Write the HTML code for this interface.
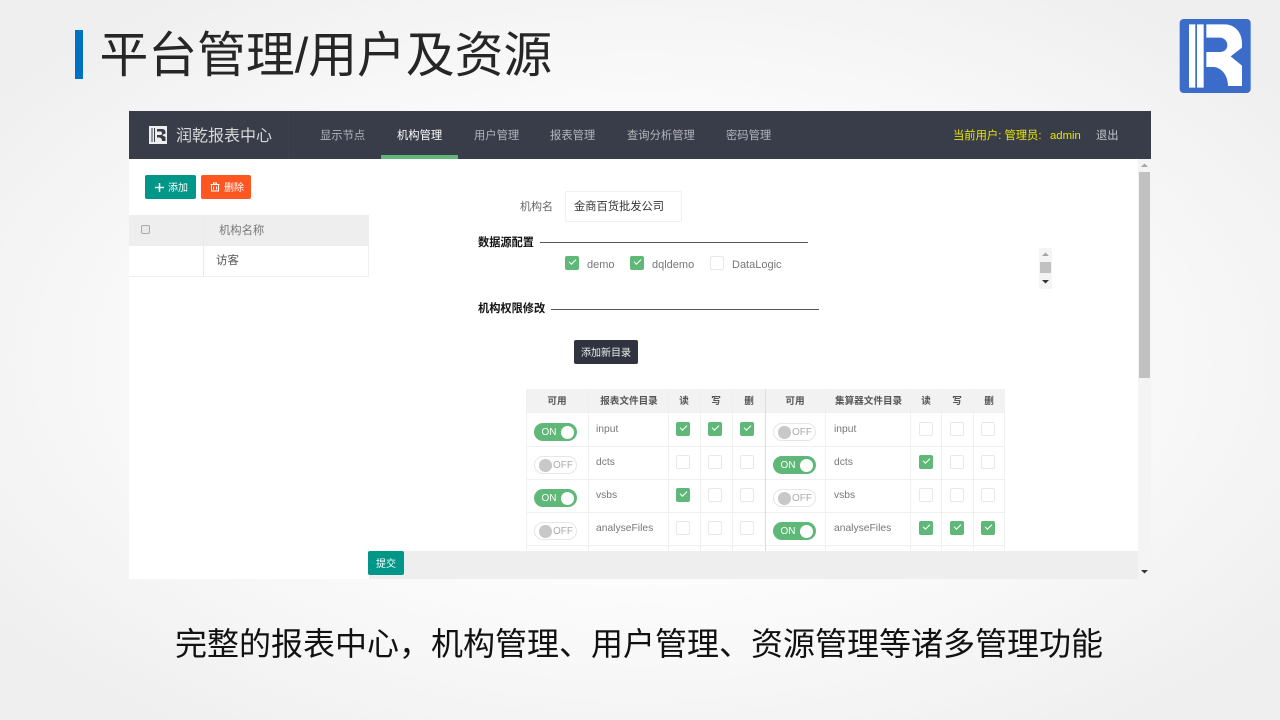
<!DOCTYPE html>
<html lang="zh"><head><meta charset="utf-8"><title>平台管理/用户及资源</title>
<style>
html,body{margin:0;padding:0}
body{width:1280px;height:720px;position:relative;overflow:hidden;background:radial-gradient(ellipse 800px 450px at 50% 50%,#fff 35%,#f7f7f7 70%,#efefef 100%);font-family:"Liberation Sans","Noto Sans CJK SC",sans-serif}
div,span,svg.a{position:absolute}
.t{white-space:nowrap;line-height:20px;height:20px}
.n{font-size:11.3px;color:#b4b6bb;top:126px}
.h{font-size:9.6px;font-weight:700;color:#555;top:392px;width:60px;text-align:center}
.r{font-size:10.3px;color:#777}
.ln{background:#f0f0f0}
.c{width:12px;height:12px;border:1px solid #e8e8e8;border-radius:2px;background:#fff}
.c.k{background:#5fb878;border-color:#5fb878}
.c.k::after{content:"";position:absolute;left:2.5px;top:2px;width:6px;height:3px;border-left:1.2px solid #fff;border-bottom:1.2px solid #fff;transform:rotate(-45deg)}
.on,.off{width:43px;height:18px;border-radius:9px;box-sizing:border-box;font-size:10px;line-height:18px}
.on{background:#5fb878;color:#fff}
.on span{left:7.5px;top:1px}
.on i{position:absolute;right:3px;top:2.5px;width:13px;height:13px;border-radius:50%;background:#fff}
.off{background:#fff;border:1px solid #e6e6e6;color:#aaa}
.off span{left:18px;top:0}
.off i{position:absolute;left:4px;top:2px;width:12.500px;height:12.500px;border-radius:50%;background:#c8c8c8}
</style></head>
<body>
<div style="left:75px;top:30px;width:8px;height:49px;background:#0070c0"></div>
<div class="t" style="left:99.5px;top:26px;height:60px;line-height:60px;font-size:48.8px;color:#262626;font-weight:400">平台管理/用户及资源</div>
<svg class="a" style="left:1178px;top:17px" width="76" height="78" viewBox="0 0 228 234">
<rect x="5" y="6" width="213" height="222" rx="12" fill="#3b6cc9"/>
<path fill="#fff" d="M33 22h19v190H33zM57 22h20v190H57zM85 22H140C172 22 192 48 192 78V92L158 118L192 146V207H150C150 175 130 150 105 150H85V105H125C140 105 148 96 148 84C148 72 138 62 125 62H85Z"/>
</svg>

<div style="left:0;top:0;width:1280px;height:600px;filter:blur(.3px)">
<div style="left:129px;top:111px;width:1022px;height:468px;background:#fff"></div>
<div style="left:129px;top:111px;width:1022px;height:48px;background:#393d49"></div>
<div style="left:288px;top:111px;width:1px;height:48px;background:#3d414e"></div>
<svg class="a" style="left:148px;top:125px" width="20" height="20" viewBox="0 0 20 20">
<rect x="1" y="1" width="18" height="18" fill="#eee"/><path fill="#393d49" d="M3.5 3h1v14h-1zM6 3h1v14H6zM9 4h5c3 0 3.5 2 3.5 3.5v1L14 10l3.5 2v4H14c0-2-1-3.5-3-3.5H9V10h3.5c1 0 1.500-.7 1.500-1.700S13.500 6.500 12.500 6.500H9z"/>
</svg>
<div class="t" style="left:176px;top:127px;font-size:16px;color:#d8d8d8">润乾报表中心</div>
<div class="t n" style="left:320px">显示节点</div>
<div class="t n" style="left:397px;color:#fff">机构管理</div>
<div style="left:381px;top:155px;width:77px;height:4px;background:#5fb878"></div>
<div class="t n" style="left:474px">用户管理</div>
<div class="t n" style="left:550px">报表管理</div>
<div class="t n" style="left:627px">查询分析管理</div>
<div class="t n" style="left:726px">密码管理</div>
<div class="t n" style="left:953px;color:#e8e800">当前用户: 管理员:</div>
<div class="t n" style="left:1050px;color:#e8e800">admin</div>
<div class="t n" style="left:1096px;color:#c4c6ca">退出</div>

<div style="left:145px;top:175px;width:51px;height:24px;background:#009688;border-radius:2px"></div>
<svg class="a" style="left:155px;top:182.500px" width="9" height="9" viewBox="0 0 9 9"><path stroke="#fff" stroke-width="1.500" d="M0 4.500h9M4.500 0v9"/></svg>
<div class="t" style="left:168px;top:179px;font-size:10px;color:#fff">添加</div>
<div style="left:201px;top:175px;width:50px;height:24px;background:#ff5722;border-radius:2px"></div>
<svg class="a" style="left:210px;top:182px" width="10" height="10" viewBox="0 0 10 10"><path fill="none" stroke="#fff" stroke-width="1" d="M.5 2.500h9M3.500 2.500V1h3v1.500M1.500 2.500V9h7V2.500M3.500 4.500v3M6.500 4.500v3"/></svg>
<div class="t" style="left:224px;top:179px;font-size:10px;color:#fff">删除</div>

<div style="left:129px;top:215px;width:240px;height:31px;background:#eee"></div>
<div style="left:129px;top:276px;width:240px;height:1px;background:#f0f0f0"></div>
<div style="left:368px;top:246px;width:1px;height:31px;background:#f0f0f0"></div>
<div style="left:203px;top:215px;width:1px;height:62px;background:#eaeaea"></div>
<div style="left:141px;top:225px;width:7px;height:7px;border:1px solid #aaa;border-radius:2px;background:#e8e8e8"></div>
<div class="t" style="left:219px;top:221px;font-size:11.300px;color:#777">机构名称</div>
<div class="t" style="left:216px;top:251px;font-size:11.500px;color:#555">访客</div>

<div class="t" style="left:520px;top:197px;font-size:11px;color:#666">机构名</div>
<div style="left:565px;top:191px;width:115px;height:29px;border:1px solid #f0f0f0;border-radius:2px"></div>
<div class="t" style="left:574px;top:197px;font-size:11.250px;color:#333">金商百货批发公司</div>
<div class="t" style="left:478px;top:233px;font-size:11.200px;font-weight:700;color:#111">数据源配置</div>
<div style="left:540px;top:242px;width:268px;height:1.300px;background:#555"></div>
<div class="c k" style="left:565px;top:256px"></div><div class="t" style="left:587px;top:255px;font-size:11px;color:#777">demo</div>
<div class="c k" style="left:630px;top:256px"></div><div class="t" style="left:652px;top:255px;font-size:11px;color:#777">dqldemo</div>
<div class="c" style="left:710px;top:256px"></div><div class="t" style="left:732px;top:255px;font-size:11px;color:#777">DataLogic</div>
<div class="t" style="left:478px;top:299px;font-size:11.200px;font-weight:700;color:#111">机构权限修改</div>
<div style="left:551px;top:309px;width:268px;height:1.300px;background:#555"></div>
<div style="left:574px;top:340px;width:64px;height:24px;background:#2f3440;border-radius:2px"></div>
<div class="t" style="left:574px;top:344px;width:64px;text-align:center;font-size:10px;color:#eee">添加新目录</div>

<div style="left:1039px;top:248px;width:13px;height:41px;background:#f4f4f4"></div>
<div style="left:1040px;top:262px;width:11px;height:11px;background:#c1c1c1"></div>
<svg class="a" style="left:1039px;top:248px" width="13" height="41" viewBox="0 0 13 41"><path fill="#a5a5a5" d="M3 8h7L6.500 4.500z"/><path fill="#333" d="M3 32h7l-3.500 3.500z"/></svg>

<!-- table -->
<div style="left:526px;top:389px;width:479px;height:23px;background:#f2f2f2"></div>
<div class="ln" style="left:526px;top:412px;width:479px;height:1px"></div>
<div class="ln" style="left:526px;top:446px;width:479px;height:1px"></div>
<div class="ln" style="left:526px;top:479px;width:479px;height:1px"></div>
<div class="ln" style="left:526px;top:512px;width:479px;height:1px"></div>
<div class="ln" style="left:526px;top:545px;width:479px;height:1px"></div>
<div class="ln" style="left:526px;top:389px;width:1px;height:162px"></div>
<div class="ln" style="left:588px;top:389px;width:1px;height:162px"></div>
<div class="ln" style="left:668px;top:389px;width:1px;height:162px"></div>
<div class="ln" style="left:700px;top:389px;width:1px;height:162px"></div>
<div class="ln" style="left:732px;top:389px;width:1px;height:162px"></div>
<div style="left:765px;top:389px;width:1px;height:162px;background:#ddd"></div>
<div class="ln" style="left:825px;top:389px;width:1px;height:162px"></div>
<div class="ln" style="left:910px;top:389px;width:1px;height:162px"></div>
<div class="ln" style="left:941px;top:389px;width:1px;height:162px"></div>
<div class="ln" style="left:973px;top:389px;width:1px;height:162px"></div>
<div class="ln" style="left:1004px;top:389px;width:1px;height:162px"></div>

<div class="t h" style="left:527px">可用</div>
<div class="t h" style="left:599px">报表文件目录</div>
<div class="t h" style="left:654px">读</div>
<div class="t h" style="left:686px">写</div>
<div class="t h" style="left:719px">删</div>
<div class="t h" style="left:765px">可用</div>
<div class="t h" style="left:835px">集算器文件目录</div>
<div class="t h" style="left:896px">读</div>
<div class="t h" style="left:927px">写</div>
<div class="t h" style="left:959px">删</div>

<div class="on" style="left:534px;top:423px"><span>ON</span><i></i></div>
<div class="t r" style="left:596px;top:420px">input</div>
<div class="c k" style="left:676px;top:422px"></div><div class="c k" style="left:708px;top:422px"></div><div class="c k" style="left:740px;top:422px"></div>
<div class="off" style="left:534px;top:456px"><span>OFF</span><i></i></div>
<div class="t r" style="left:596px;top:453px">dcts</div>
<div class="c" style="left:676px;top:455px"></div><div class="c" style="left:708px;top:455px"></div><div class="c" style="left:740px;top:455px"></div>
<div class="on" style="left:534px;top:489px"><span>ON</span><i></i></div>
<div class="t r" style="left:596px;top:486px">vsbs</div>
<div class="c k" style="left:676px;top:488px"></div><div class="c" style="left:708px;top:488px"></div><div class="c" style="left:740px;top:488px"></div>
<div class="off" style="left:534px;top:522px"><span>OFF</span><i></i></div>
<div class="t r" style="left:596px;top:519px">analyseFiles</div>
<div class="c" style="left:676px;top:521px"></div><div class="c" style="left:708px;top:521px"></div><div class="c" style="left:740px;top:521px"></div>

<div class="off" style="left:773px;top:423px"><span>OFF</span><i></i></div>
<div class="t r" style="left:834px;top:420px">input</div>
<div class="c" style="left:919px;top:422px"></div><div class="c" style="left:950px;top:422px"></div><div class="c" style="left:981px;top:422px"></div>
<div class="on" style="left:773px;top:456px"><span>ON</span><i></i></div>
<div class="t r" style="left:834px;top:453px">dcts</div>
<div class="c k" style="left:919px;top:455px"></div><div class="c" style="left:950px;top:455px"></div><div class="c" style="left:981px;top:455px"></div>
<div class="off" style="left:773px;top:489px"><span>OFF</span><i></i></div>
<div class="t r" style="left:834px;top:486px">vsbs</div>
<div class="c" style="left:919px;top:488px"></div><div class="c" style="left:950px;top:488px"></div><div class="c" style="left:981px;top:488px"></div>
<div class="on" style="left:773px;top:522px"><span>ON</span><i></i></div>
<div class="t r" style="left:834px;top:519px">analyseFiles</div>
<div class="c k" style="left:919px;top:521px"></div><div class="c k" style="left:950px;top:521px"></div><div class="c k" style="left:981px;top:521px"></div>

<div style="left:369px;top:551px;width:769px;height:28px;background:#eee"></div>
<div style="left:368px;top:551px;width:36px;height:24px;background:#009688;border-radius:2px"></div>
<div class="t" style="left:368px;top:555px;width:36px;text-align:center;font-size:10px;color:#fff">提交</div>

<div style="left:1138px;top:159px;width:13px;height:420px;background:#f4f4f4"></div>
<div style="left:1139px;top:172px;width:11px;height:206px;background:#c1c1c1"></div>
<svg class="a" style="left:1138px;top:159px" width="13" height="420" viewBox="0 0 13 420"><path fill="#a5a5a5" d="M3 8h7L6.500 4.500z"/><path fill="#333" d="M3 411h7l-3.500 3.500z"/></svg>
</div>

<div class="t" style="left:175px;top:622px;height:44px;line-height:44px;font-size:32px;color:#111">完整的报表中心，机构管理、用户管理、资源管理等诸多管理功能</div>
</body></html>
